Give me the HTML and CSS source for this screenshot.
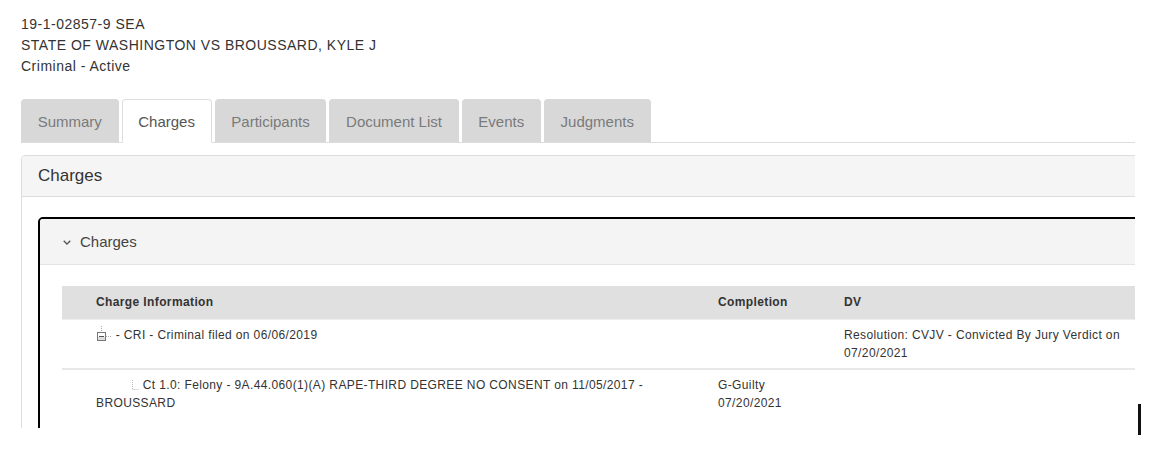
FILE: index.html
```html
<!DOCTYPE html>
<html lang="en">
<head>
<meta charset="utf-8">
<title>19-1-02857-9 SEA - Charges</title>
<link rel="stylesheet" href="styles.css">
</head>
<body>
<div class="viewport">
  <div class="page">
    <div class="case-head">
      <div class="case-line">19-1-02857-9 SEA</div>
      <div class="case-line">STATE OF WASHINGTON VS BROUSSARD, KYLE J</div>
      <div class="case-line">Criminal - Active</div>
    </div>

    <ul class="tabs">
      <li class="tab">Summary</li>
      <li class="tab tab-active">Charges</li>
      <li class="tab">Participants</li>
      <li class="tab">Document List</li>
      <li class="tab">Events</li>
      <li class="tab">Judgments</li>
    </ul>

    <div class="panel">
      <div class="panel-heading">Charges</div>
      <div class="panel-body">
        <div class="box">
          <div class="box-heading">
            <svg class="chevron" width="8" height="5" viewBox="0 0 8 5"><polyline points="0.7,0.7 4,4 7.3,0.7" fill="none" stroke="#555" stroke-width="1.3"/></svg>
            <span>Charges</span>
          </div>
          <div class="box-body">
            <table class="charges">
              <colgroup>
                <col class="col-info">
                <col class="col-completion">
                <col class="col-dv">
              </colgroup>
              <thead>
                <tr>
                  <th class="first">Charge Information</th>
                  <th>Completion</th>
                  <th>DV</th>
                </tr>
              </thead>
              <tbody>
                <tr>
                  <td class="first"><svg class="tree-icon" width="16" height="17" viewBox="0 0 16 17"><line x1="5.5" y1="0" x2="5.5" y2="6" stroke="#aaa" stroke-width="1" stroke-dasharray="1 1"/><rect x="1.5" y="6.5" width="8" height="8" fill="#fff" stroke="#777" stroke-width="1"/><rect x="2" y="11" width="7" height="3" fill="#ddd"/><line x1="3" y1="10.5" x2="8" y2="10.5" stroke="#555" stroke-width="1"/><line x1="10" y1="10.5" x2="15" y2="10.5" stroke="#aaa" stroke-width="1" stroke-dasharray="1 1"/></svg> - CRI - Criminal filed on 06/06/2019</td>
                  <td></td>
                  <td>Resolution: CVJV - Convicted By Jury Verdict on 07/20/2021</td>
                </tr>
                <tr class="last-row">
                  <td class="first"><span class="indent"></span><svg class="tree-line" width="8" height="10" viewBox="0 0 8 10"><line x1="1.5" y1="0" x2="1.5" y2="9" stroke="#bbb" stroke-width="1" stroke-dasharray="1 1"/><line x1="1.5" y1="9.5" x2="8" y2="9.5" stroke="#bbb" stroke-width="1" stroke-dasharray="1 1"/></svg> Ct 1.0: Felony - 9A.44.060(1)(A) RAPE-THIRD DEGREE NO CONSENT on 11/05/2017 - BROUSSARD</td>
                  <td>G-Guilty<br>07/20/2021</td>
                  <td></td>
                </tr>
              </tbody>
            </table>
          </div>
        </div>
      </div>
    </div>
  </div>
</div>
<div class="caret-bar"></div>
</body>
</html>
```

FILE: styles.css
```css
* {
  box-sizing: border-box;
}

body {
  margin: 0;
  background: #fff;
  font-family: "Liberation Sans", Arial, sans-serif;
  color: #333;
}

.viewport {
  width: 1135px;
  height: 428px;
  overflow: hidden;
}

.page {
  width: 1193px;
  padding: 13.5px 0 0 21px;
}

.case-head {
  font-size: 14px;
  line-height: 21px;
  letter-spacing: 0.5px;
  color: #333;
}

.tabs {
  list-style: none;
  margin: 22.5px 0 0 0;
  padding: 0;
  display: flex;
  gap: 3px;
  border-bottom: 1px solid #ddd;
}

.tab {
  height: 44px;
  line-height: 42px;
  padding: 1px 15.7px 0 15.7px;
  font-size: 15px;
  color: #7a7a7a;
  background: #d8d8d8;
  border: 1px solid #d8d8d8;
  border-bottom-color: #ddd;
  border-radius: 4px 4px 0 0;
  margin-bottom: -1px;
}

.tab-active {
  background: #fff;
  color: #555;
  border-color: #ddd #ddd #fff #ddd;
}

.panel {
  margin-top: 12px;
  border: 1px solid #ddd;
  border-radius: 4px;
}

.panel-heading {
  height: 41px;
  line-height: 40px;
  padding: 0 16px;
  font-size: 17px;
  color: #333;
  background: #f5f5f5;
  border-bottom: 1px solid #ddd;
  border-radius: 3px 3px 0 0;
}

.panel-body {
  padding: 20px 16px 16px 16px;
}

.box {
  border: 2px solid #000;
  border-radius: 5px;
}

.box-heading {
  height: 46px;
  display: flex;
  align-items: center;
  gap: 9px;
  padding: 0 0 0 23px;
  font-size: 15px;
  color: #444;
  background: #f4f4f4;
  border-bottom: 1px solid #e4e4e4;
  border-radius: 3px 3px 0 0;
}

.chevron {
  display: block;
  margin-top: 1px;
}

.box-body {
  padding: 21px 22px 22px 22px;
}

.charges {
  width: 100%;
  border-collapse: collapse;
  table-layout: fixed;
  font-size: 12px;
  line-height: 18px;
  letter-spacing: 0.38px;
}

.col-info {
  width: 648px;
}

.col-completion {
  width: 126px;
}

.charges th {
  text-align: left;
  font-weight: bold;
  color: #333;
  background: #e0e0e0;
  padding: 7px 8px 8px 8px;
  border-bottom: 1px solid #eee;
}

.charges td {
  vertical-align: top;
  padding: 6px 8px;
  color: #333;
  border-bottom: 2px solid #e8e8e8;
}

.charges .last-row td {
  border-bottom: none;
  padding-bottom: 14px;
}

.charges .first {
  padding-left: 34px;
}

.tree-icon {
  vertical-align: top;
}

.indent {
  display: inline-block;
  width: 35px;
}

.tree-line {
  vertical-align: -1px;
}

.caret-bar {
  position: absolute;
  left: 1138px;
  top: 404px;
  width: 3px;
  height: 31px;
  background: #111;
}
```
